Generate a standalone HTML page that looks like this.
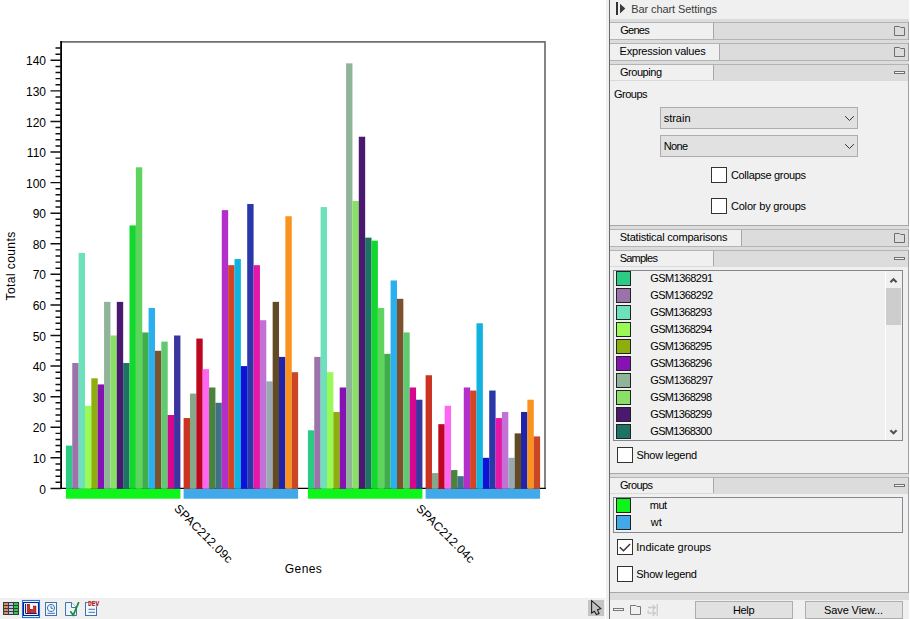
<!DOCTYPE html>
<html><head><meta charset="utf-8">
<style>
html,body{margin:0;padding:0;width:910px;height:619px;overflow:hidden;background:#fff;}
body{position:relative;font-family:"Liberation Sans",sans-serif;}
.a{position:absolute;box-sizing:content-box;}
.t{position:absolute;font-size:11px;color:#000;white-space:nowrap;font-family:"Liberation Sans",sans-serif;}
</style></head><body>
<svg class="a" style="left:0;top:0" width="605" height="598">
<rect x="0" y="0" width="605" height="598" fill="#fff"/>
<path d="M60.5 41.9 H545 V488.4" fill="none" stroke="#707070" stroke-width="1.7"/>
<path d="M61.1 41 V488.4" fill="none" stroke="#000" stroke-width="1.8"/>
<path d="M60.2 488.35 H545.8" fill="none" stroke="#000" stroke-width="1.15"/>
<rect x="65.90" y="445.59" width="6.381" height="43.26" fill="#2BCB85"/>
<rect x="72.26" y="363.02" width="6.381" height="125.83" fill="#9B72AA"/>
<rect x="78.62" y="252.93" width="6.381" height="235.92" fill="#6DE0BC"/>
<rect x="84.98" y="405.83" width="6.381" height="83.02" fill="#99F955"/>
<rect x="91.34" y="378.31" width="6.381" height="110.54" fill="#8DAF0B"/>
<rect x="97.71" y="384.43" width="6.381" height="104.42" fill="#8612B3"/>
<rect x="104.07" y="301.86" width="6.381" height="186.99" fill="#90B49A"/>
<rect x="110.43" y="335.50" width="6.381" height="153.35" fill="#8ADF67"/>
<rect x="116.79" y="301.86" width="6.381" height="186.99" fill="#4B1870"/>
<rect x="123.15" y="363.02" width="6.381" height="125.83" fill="#1E7265"/>
<rect x="129.51" y="225.41" width="6.381" height="263.44" fill="#12D82E"/>
<rect x="135.87" y="167.31" width="6.381" height="321.54" fill="#5ED45E"/>
<rect x="142.23" y="332.44" width="6.381" height="156.41" fill="#3EAE48"/>
<rect x="148.59" y="307.98" width="6.381" height="180.87" fill="#2AAFEF"/>
<rect x="154.96" y="350.79" width="6.381" height="138.06" fill="#7D502E"/>
<rect x="161.32" y="341.62" width="6.381" height="147.23" fill="#5FCA71"/>
<rect x="167.68" y="415.01" width="6.381" height="73.84" fill="#D7068F"/>
<rect x="174.04" y="335.50" width="6.381" height="153.35" fill="#3C35A0"/>
<rect x="183.60" y="418.07" width="6.381" height="70.78" fill="#CC3222"/>
<rect x="189.96" y="393.60" width="6.381" height="95.25" fill="#86A888"/>
<rect x="196.32" y="338.56" width="6.381" height="150.29" fill="#BD061F"/>
<rect x="202.68" y="369.14" width="6.381" height="119.71" fill="#FF66F2"/>
<rect x="209.04" y="387.49" width="6.381" height="101.36" fill="#48853A"/>
<rect x="215.41" y="402.78" width="6.381" height="86.07" fill="#3F7087"/>
<rect x="221.77" y="210.12" width="6.381" height="278.73" fill="#B32FC9"/>
<rect x="228.13" y="265.17" width="6.381" height="223.68" fill="#D24423"/>
<rect x="234.49" y="259.05" width="6.381" height="229.80" fill="#10B3E0"/>
<rect x="240.85" y="366.08" width="6.381" height="122.77" fill="#0C13D6"/>
<rect x="247.21" y="204.01" width="6.381" height="284.84" fill="#2A37AA"/>
<rect x="253.57" y="265.17" width="6.381" height="223.68" fill="#E517A7"/>
<rect x="259.93" y="320.21" width="6.381" height="168.64" fill="#C271D5"/>
<rect x="266.29" y="381.37" width="6.381" height="107.48" fill="#98A9B4"/>
<rect x="272.66" y="301.86" width="6.381" height="186.99" fill="#624B22"/>
<rect x="279.02" y="356.91" width="6.381" height="131.94" fill="#2123AB"/>
<rect x="285.38" y="216.24" width="6.381" height="272.61" fill="#FA931E"/>
<rect x="291.74" y="372.20" width="6.381" height="116.65" fill="#CB4624"/>
<rect x="307.90" y="430.30" width="6.381" height="58.55" fill="#2BCB85"/>
<rect x="314.26" y="356.91" width="6.381" height="131.94" fill="#9B72AA"/>
<rect x="320.62" y="207.06" width="6.381" height="281.79" fill="#6DE0BC"/>
<rect x="326.98" y="372.20" width="6.381" height="116.65" fill="#99F955"/>
<rect x="333.34" y="411.95" width="6.381" height="76.90" fill="#8DAF0B"/>
<rect x="339.71" y="387.49" width="6.381" height="101.36" fill="#8612B3"/>
<rect x="346.07" y="63.34" width="6.381" height="425.51" fill="#90B49A"/>
<rect x="352.43" y="200.95" width="6.381" height="287.90" fill="#8ADF67"/>
<rect x="358.79" y="136.73" width="6.381" height="352.12" fill="#4B1870"/>
<rect x="365.15" y="237.64" width="6.381" height="251.21" fill="#1E7265"/>
<rect x="371.51" y="240.70" width="6.381" height="248.15" fill="#12D82E"/>
<rect x="377.87" y="307.98" width="6.381" height="180.87" fill="#5ED45E"/>
<rect x="384.23" y="353.85" width="6.381" height="135.00" fill="#3EAE48"/>
<rect x="390.59" y="280.46" width="6.381" height="208.39" fill="#2AAFEF"/>
<rect x="396.96" y="298.80" width="6.381" height="190.05" fill="#7D502E"/>
<rect x="403.32" y="332.44" width="6.381" height="156.41" fill="#5FCA71"/>
<rect x="409.68" y="387.49" width="6.381" height="101.36" fill="#D7068F"/>
<rect x="416.04" y="399.72" width="6.381" height="89.13" fill="#3C35A0"/>
<rect x="425.60" y="375.25" width="6.381" height="113.60" fill="#CC3222"/>
<rect x="431.96" y="473.11" width="6.381" height="15.74" fill="#86A888"/>
<rect x="438.32" y="424.18" width="6.381" height="64.67" fill="#BD061F"/>
<rect x="444.68" y="405.83" width="6.381" height="83.02" fill="#FF66F2"/>
<rect x="451.04" y="470.05" width="6.381" height="18.80" fill="#48853A"/>
<rect x="457.41" y="476.17" width="6.381" height="12.68" fill="#3F7087"/>
<rect x="463.77" y="387.49" width="6.381" height="101.36" fill="#B32FC9"/>
<rect x="470.13" y="390.54" width="6.381" height="98.31" fill="#D24423"/>
<rect x="476.49" y="323.27" width="6.381" height="165.58" fill="#10B3E0"/>
<rect x="482.85" y="457.82" width="6.381" height="31.03" fill="#0C13D6"/>
<rect x="489.21" y="390.54" width="6.381" height="98.31" fill="#2A37AA"/>
<rect x="495.57" y="418.07" width="6.381" height="70.78" fill="#E517A7"/>
<rect x="501.93" y="411.95" width="6.381" height="76.90" fill="#C271D5"/>
<rect x="508.29" y="457.82" width="6.381" height="31.03" fill="#98A9B4"/>
<rect x="514.66" y="433.36" width="6.381" height="55.49" fill="#624B22"/>
<rect x="521.02" y="411.95" width="6.381" height="76.90" fill="#2123AB"/>
<rect x="527.38" y="399.72" width="6.381" height="89.13" fill="#FA931E"/>
<rect x="533.74" y="436.41" width="6.381" height="52.44" fill="#CB4624"/>
<rect x="65.90" y="488.85" width="114.50" height="9.85" fill="#0DF51A"/>
<rect x="183.60" y="488.85" width="114.50" height="9.85" fill="#41A9EA"/>
<rect x="307.90" y="488.85" width="114.50" height="9.85" fill="#0DF51A"/>
<rect x="425.60" y="488.85" width="114.50" height="9.85" fill="#41A9EA"/>
<path d="M50.5 488.40H61 M55.5 482.28H61 M55.5 476.17H61 M55.5 470.05H61 M55.5 463.94H61 M50.5 457.82H61 M55.5 451.70H61 M55.5 445.59H61 M55.5 439.47H61 M55.5 433.36H61 M50.5 427.24H61 M55.5 421.12H61 M55.5 415.01H61 M55.5 408.89H61 M55.5 402.78H61 M50.5 396.66H61 M55.5 390.54H61 M55.5 384.43H61 M55.5 378.31H61 M55.5 372.20H61 M50.5 366.08H61 M55.5 359.96H61 M55.5 353.85H61 M55.5 347.73H61 M55.5 341.62H61 M50.5 335.50H61 M55.5 329.38H61 M55.5 323.27H61 M55.5 317.15H61 M55.5 311.04H61 M50.5 304.92H61 M55.5 298.80H61 M55.5 292.69H61 M55.5 286.57H61 M55.5 280.46H61 M50.5 274.34H61 M55.5 268.22H61 M55.5 262.11H61 M55.5 255.99H61 M55.5 249.88H61 M50.5 243.76H61 M55.5 237.64H61 M55.5 231.53H61 M55.5 225.41H61 M55.5 219.30H61 M50.5 213.18H61 M55.5 207.06H61 M55.5 200.95H61 M55.5 194.83H61 M55.5 188.72H61 M50.5 182.60H61 M55.5 176.48H61 M55.5 170.37H61 M55.5 164.25H61 M55.5 158.14H61 M50.5 152.02H61 M55.5 145.90H61 M55.5 139.79H61 M55.5 133.67H61 M55.5 127.56H61 M50.5 121.44H61 M55.5 115.32H61 M55.5 109.21H61 M55.5 103.09H61 M55.5 96.98H61 M50.5 90.86H61 M55.5 84.74H61 M55.5 78.63H61 M55.5 72.51H61 M55.5 66.40H61 M50.5 60.28H61 M55.5 54.16H61 M55.5 48.05H61" stroke="#111" stroke-width="1.45" fill="none"/>
<text x="46" y="493.53" text-anchor="end" font-size="12" font-family="Liberation Sans" fill="#000">0</text>
<text x="46" y="462.95" text-anchor="end" font-size="12" font-family="Liberation Sans" fill="#000">10</text>
<text x="46" y="432.37" text-anchor="end" font-size="12" font-family="Liberation Sans" fill="#000">20</text>
<text x="46" y="401.79" text-anchor="end" font-size="12" font-family="Liberation Sans" fill="#000">30</text>
<text x="46" y="371.21" text-anchor="end" font-size="12" font-family="Liberation Sans" fill="#000">40</text>
<text x="46" y="340.63" text-anchor="end" font-size="12" font-family="Liberation Sans" fill="#000">50</text>
<text x="46" y="310.05" text-anchor="end" font-size="12" font-family="Liberation Sans" fill="#000">60</text>
<text x="46" y="279.47" text-anchor="end" font-size="12" font-family="Liberation Sans" fill="#000">70</text>
<text x="46" y="248.89" text-anchor="end" font-size="12" font-family="Liberation Sans" fill="#000">80</text>
<text x="46" y="218.31" text-anchor="end" font-size="12" font-family="Liberation Sans" fill="#000">90</text>
<text x="46" y="187.73" text-anchor="end" font-size="12" font-family="Liberation Sans" fill="#000">100</text>
<text x="46" y="157.15" text-anchor="end" font-size="12" font-family="Liberation Sans" fill="#000">110</text>
<text x="46" y="126.57" text-anchor="end" font-size="12" font-family="Liberation Sans" fill="#000">120</text>
<text x="46" y="95.99" text-anchor="end" font-size="12" font-family="Liberation Sans" fill="#000">130</text>
<text x="46" y="65.41" text-anchor="end" font-size="12" font-family="Liberation Sans" fill="#000">140</text>
<text transform="translate(15.3,266.1) rotate(-90)" text-anchor="middle" font-size="12" font-family="Liberation Sans" fill="#000" textLength="68.6" lengthAdjust="spacing">Total counts</text>
<text x="303.3" y="573" text-anchor="middle" font-size="12" font-family="Liberation Sans" fill="#000" textLength="36.9" lengthAdjust="spacing">Genes</text>
<text transform="translate(173.4,509.3) rotate(45)" font-size="12" font-family="Liberation Sans" fill="#000" textLength="77" lengthAdjust="spacing">SPAC212.09c</text>
<text transform="translate(415.4,509.3) rotate(45)" font-size="12" font-family="Liberation Sans" fill="#000" textLength="77" lengthAdjust="spacing">SPAC212.04c</text>
</svg>

<div class="a" style="left:0;top:598px;width:605px;height:21px;background:#f0f0f0"></div>
<svg class="a" style="left:0;top:598px" width="605" height="21">
 <!-- table icon -->
 <rect x="3" y="4" width="16" height="13" fill="#3a3a3a"/>
 <g>
  <rect x="4" y="5" width="4" height="2" fill="#d98a6a"/><rect x="9" y="5" width="4" height="2" fill="#b8c8f0"/><rect x="14" y="5" width="4" height="2" fill="#2ec84a"/>
  <rect x="4" y="8" width="4" height="2" fill="#d98a6a"/><rect x="9" y="8" width="4" height="2" fill="#b8c8f0"/><rect x="14" y="8" width="4" height="2" fill="#2ec84a"/>
  <rect x="4" y="11" width="4" height="2" fill="#d98a6a"/><rect x="9" y="11" width="4" height="2" fill="#b8c8f0"/><rect x="14" y="11" width="4" height="2" fill="#2ec84a"/>
  <rect x="4" y="14" width="4" height="2" fill="#d98a6a"/><rect x="9" y="14" width="4" height="2" fill="#b8c8f0"/><rect x="14" y="14" width="4" height="2" fill="#2ec84a"/>
 </g>
 <!-- bar chart selected -->
 <rect x="22.5" y="2.5" width="17" height="17" fill="#fff" stroke="#1a78e0" stroke-width="1.1"/>
 <rect x="23.5" y="4.5" width="15" height="13" fill="#f4f9ff" stroke="#14207a" stroke-width="1.1"/>
 <rect x="27.2" y="6.3" width="2.4" height="9.2" fill="#e8281c" stroke="#7a0606" stroke-width="0.6"/>
 <rect x="30.4" y="11.5" width="2" height="4" fill="#e8281c" stroke="#7a0606" stroke-width="0.6"/>
 <rect x="33.5" y="8.1" width="2.4" height="7.4" fill="#e8281c" stroke="#7a0606" stroke-width="0.6"/>
 <path d="M25.5 6V15.5H36.8" stroke="#14207a" stroke-width="1" fill="none"/>
 <!-- clock doc -->
 <rect x="45.5" y="4.5" width="11" height="13" fill="#f4f8fc" stroke="#3e73b0" stroke-width="1"/>
 <circle cx="51" cy="10" r="3.6" fill="none" stroke="#3e73b0" stroke-width="1"/>
 <path d="M51 7.8V10.3H53.2 M47.5 15.3H55" stroke="#3e73b0" stroke-width="1" fill="none"/>
 <!-- doc check -->
 <path d="M65.5 4.5H71.5L76.5 9.5V17.5H65.5Z" fill="#eef3fa" stroke="#3e73b0" stroke-width="1"/>
 <path d="M71.5 4.5V9.5H76.5" fill="#fff" stroke="#3e73b0" stroke-width="1"/>
 <path d="M70.3 13.3L73.3 17L78.8 4.1" fill="none" stroke="#1b8a3a" stroke-width="1.7"/>
 <!-- dev doc -->
 <rect x="85.5" y="4.5" width="11" height="13" fill="#f4f8fc" stroke="#3e73b0" stroke-width="1"/>
 <path d="M88.5 11.3H95 M88.5 14.3H95" stroke="#3e73b0" stroke-width="1"/>
 <rect x="87.5" y="2.5" width="12" height="6" fill="#f0f0f0" opacity="0.6"/>
 <text x="88" y="8" font-size="6.8" font-family="Liberation Mono" font-weight="bold" fill="#b80c0c" textLength="11.2" lengthAdjust="spacingAndGlyphs">DEV</text>
 <!-- cursor -->
 <rect x="588" y="2" width="16" height="16" fill="#c4c4c4"/>
 <path d="M591.6 2.6V15L594.4 13.2L596.4 16.6L599.1 15.4L597.4 11.9L600.8 10.5Z" fill="#c4c4c4" stroke="#222" stroke-width="1.1" stroke-linejoin="miter"/>
</svg>

<div class="a" style="left:605px;top:0;width:1px;height:619px;background:#fff"></div><div class="a" style="left:606px;top:0;width:3px;height:619px;background:#efefef"></div><div class="a" style="left:609px;top:0;width:1px;height:619px;background:#6b6b6b"></div><div class="a" style="left:610px;top:0;width:299px;height:619px;background:#f0f0f0"></div><div class="a" style="left:909px;top:0;width:1px;height:619px;background:#fff"></div><svg class="a" style="left:610px;top:0" width="30" height="19"><rect x="6" y="2" width="2" height="13" fill="#333"/><path d="M10 3.8L15.3 8.6L10 13.4Z" fill="#3a3a3a"/></svg><div class="a" style="left:610px;top:19px;width:299px;height:3px;background:#dcdcdc"></div><div class="a" style="left:610px;top:40px;width:299px;height:3px;background:#dcdcdc"></div><div class="a" style="left:610px;top:61px;width:299px;height:3px;background:#dcdcdc"></div><div class="a" style="left:610px;top:226px;width:299px;height:3px;background:#dcdcdc"></div><div class="a" style="left:610px;top:247px;width:299px;height:3px;background:#dcdcdc"></div><div class="a" style="left:610px;top:474px;width:299px;height:3px;background:#dcdcdc"></div><div class="a" style="left:610px;top:593px;width:299px;height:7px;background:#dcdcdc"></div><div class="a" style="left:610px;top:22px;width:298px;height:1px;background:#b4b4b4"></div><div class="a" style="left:610px;top:23px;width:103px;height:16px;background:#f0f0f0"></div><div class="a" style="left:713px;top:23px;width:1px;height:16px;background:#a8a8a8"></div><div class="a" style="left:714px;top:23px;width:194px;height:16px;background:#dcdcdc"></div><div class="t" style="left:620px;top:23px;line-height:16px"></div><svg class="a" style="left:893px;top:25px" width="13" height="12"><path d="M1.5 1.5H6.5L7.5 2.5H11.5V10.5H1.5Z" fill="none" stroke="#6e6e6e" stroke-width="1"/></svg><div class="a" style="left:610px;top:39px;width:298px;height:1px;background:#b4b4b4"></div><div class="a" style="left:908px;top:22px;width:1px;height:18px;background:#a0a0a0"></div><div class="a" style="left:610px;top:43px;width:298px;height:1px;background:#b4b4b4"></div><div class="a" style="left:610px;top:44px;width:109px;height:16px;background:#f0f0f0"></div><div class="a" style="left:719px;top:44px;width:1px;height:16px;background:#a8a8a8"></div><div class="a" style="left:720px;top:44px;width:188px;height:16px;background:#dcdcdc"></div><div class="t" style="left:620px;top:44px;line-height:16px"></div><svg class="a" style="left:893px;top:46px" width="13" height="12"><path d="M1.5 1.5H6.5L7.5 2.5H11.5V10.5H1.5Z" fill="none" stroke="#6e6e6e" stroke-width="1"/></svg><div class="a" style="left:610px;top:60px;width:298px;height:1px;background:#b4b4b4"></div><div class="a" style="left:908px;top:43px;width:1px;height:18px;background:#a0a0a0"></div><div class="a" style="left:610px;top:64px;width:298px;height:1px;background:#b4b4b4"></div><div class="a" style="left:610px;top:65px;width:103px;height:16px;background:#f0f0f0"></div><div class="a" style="left:713px;top:65px;width:1px;height:16px;background:#a8a8a8"></div><div class="a" style="left:714px;top:65px;width:194px;height:16px;background:#dcdcdc"></div><div class="t" style="left:620px;top:65px;line-height:16px"></div><svg class="a" style="left:893px;top:71px" width="13" height="5"><rect x="1.5" y="0.5" width="10" height="2" fill="#f4f4f4" stroke="#707070" stroke-width="1"/></svg><div class="a" style="left:610px;top:80px;width:298px;height:1px;background:#dadada"></div><div class="a" style="left:610px;top:225px;width:298px;height:1px;background:#a8a8a8"></div><div class="a" style="left:908px;top:64px;width:1px;height:162px;background:#a0a0a0"></div><div class="a" style="left:660px;top:107px;width:196px;height:20px;border:1px solid #adadad;background:#e1e1e1"></div><div class="t" style="left:663px;top:108px;line-height:20px"></div><svg class="a" style="left:842px;top:114px" width="14" height="9"><path d="M3.1 2.2L7.5 6.5L11.9 2.2" fill="none" stroke="#333" stroke-width="1"/></svg><div class="a" style="left:660px;top:135px;width:196px;height:20px;border:1px solid #adadad;background:#e1e1e1"></div><div class="t" style="left:663px;top:136px;line-height:20px"></div><svg class="a" style="left:842px;top:142px" width="14" height="9"><path d="M3.1 2.2L7.5 6.5L11.9 2.2" fill="none" stroke="#333" stroke-width="1"/></svg><div class="a" style="left:711px;top:167px;width:14px;height:14px;border:1px solid #333;background:#fff"></div><div class="a" style="left:711px;top:198px;width:14px;height:14px;border:1px solid #333;background:#fff"></div><div class="a" style="left:610px;top:229px;width:298px;height:1px;background:#b4b4b4"></div><div class="a" style="left:610px;top:230px;width:131px;height:16px;background:#f0f0f0"></div><div class="a" style="left:741px;top:230px;width:1px;height:16px;background:#a8a8a8"></div><div class="a" style="left:742px;top:230px;width:166px;height:16px;background:#dcdcdc"></div><div class="t" style="left:620px;top:230px;line-height:16px"></div><svg class="a" style="left:893px;top:232px" width="13" height="12"><path d="M1.5 1.5H6.5L7.5 2.5H11.5V10.5H1.5Z" fill="none" stroke="#6e6e6e" stroke-width="1"/></svg><div class="a" style="left:610px;top:246px;width:298px;height:1px;background:#b4b4b4"></div><div class="a" style="left:908px;top:229px;width:1px;height:18px;background:#a0a0a0"></div><div class="a" style="left:610px;top:250px;width:298px;height:1px;background:#b4b4b4"></div><div class="a" style="left:610px;top:251px;width:103px;height:16px;background:#f0f0f0"></div><div class="a" style="left:713px;top:251px;width:1px;height:16px;background:#a8a8a8"></div><div class="a" style="left:714px;top:251px;width:194px;height:16px;background:#dcdcdc"></div><div class="t" style="left:620px;top:251px;line-height:16px"></div><svg class="a" style="left:893px;top:257px" width="13" height="5"><rect x="1.5" y="0.5" width="10" height="2" fill="#f4f4f4" stroke="#707070" stroke-width="1"/></svg><div class="a" style="left:610px;top:266px;width:298px;height:1px;background:#dadada"></div><div class="a" style="left:610px;top:473px;width:298px;height:1px;background:#a8a8a8"></div><div class="a" style="left:908px;top:250px;width:1px;height:224px;background:#a0a0a0"></div><div class="a" style="left:613px;top:270px;width:288px;height:169px;border:1px solid #828790;background:#f0f0f0;overflow:hidden"><div class="a" style="left:2px;top:0px;width:13px;height:13px;border:1px solid #222;background:#2BCB85"></div><div class="a" style="left:2px;top:17px;width:13px;height:13px;border:1px solid #222;background:#9B72AA"></div><div class="a" style="left:2px;top:34px;width:13px;height:13px;border:1px solid #222;background:#6DE0BC"></div><div class="a" style="left:2px;top:51px;width:13px;height:13px;border:1px solid #222;background:#99F955"></div><div class="a" style="left:2px;top:68px;width:13px;height:13px;border:1px solid #222;background:#8DAF0B"></div><div class="a" style="left:2px;top:85px;width:13px;height:13px;border:1px solid #222;background:#8612B3"></div><div class="a" style="left:2px;top:102px;width:13px;height:13px;border:1px solid #222;background:#90B49A"></div><div class="a" style="left:2px;top:119px;width:13px;height:13px;border:1px solid #222;background:#8ADF67"></div><div class="a" style="left:2px;top:136px;width:13px;height:13px;border:1px solid #222;background:#4B1870"></div><div class="a" style="left:2px;top:153px;width:13px;height:13px;border:1px solid #222;background:#1E7265"></div></div><div class="a" style="left:885px;top:271px;width:1px;height:169px;background:#fff"></div><div class="a" style="left:886px;top:288px;width:15px;height:37px;background:#cdcdcd"></div><svg class="a" style="left:886px;top:274px" width="15" height="12"><path d="M4.4 8.3L7.5 5.2L10.6 8.3" fill="none" stroke="#505050" stroke-width="2"/></svg><svg class="a" style="left:886px;top:426px" width="15" height="12"><path d="M4.4 4.2L7.5 7.3L10.6 4.2" fill="none" stroke="#505050" stroke-width="2"/></svg><div class="a" style="left:617px;top:447px;width:14px;height:14px;border:1px solid #333;background:#fff"></div><div class="a" style="left:610px;top:477px;width:298px;height:1px;background:#b4b4b4"></div><div class="a" style="left:610px;top:478px;width:103px;height:16px;background:#f0f0f0"></div><div class="a" style="left:713px;top:478px;width:1px;height:16px;background:#a8a8a8"></div><div class="a" style="left:714px;top:478px;width:194px;height:16px;background:#dcdcdc"></div><div class="t" style="left:620px;top:478px;line-height:16px"></div><svg class="a" style="left:893px;top:484px" width="13" height="5"><rect x="1.5" y="0.5" width="10" height="2" fill="#f4f4f4" stroke="#707070" stroke-width="1"/></svg><div class="a" style="left:610px;top:493px;width:298px;height:1px;background:#dadada"></div><div class="a" style="left:610px;top:592px;width:298px;height:1px;background:#a8a8a8"></div><div class="a" style="left:908px;top:477px;width:1px;height:116px;background:#a0a0a0"></div><div class="a" style="left:613px;top:497px;width:288px;height:34px;border:1px solid #828790;background:#f0f0f0"></div><div class="a" style="left:616px;top:498px;width:13px;height:13px;border:1px solid #222;background:#0DF51A"></div><div class="a" style="left:616px;top:515px;width:13px;height:13px;border:1px solid #222;background:#41A9EA"></div><div class="a" style="left:617px;top:539px;width:14px;height:14px;border:1px solid #333;background:#fff"></div><svg class="a" style="left:617px;top:539px" width="16" height="16"><path d="M2.8 8.2L6.5 11.8L13.1 4.9" fill="none" stroke="#333" stroke-width="1.4"/></svg><div class="a" style="left:617px;top:566px;width:14px;height:14px;border:1px solid #333;background:#fff"></div><svg class="a" style="left:610px;top:600px" width="60" height="19"><rect x="3.5" y="8.5" width="10" height="2" fill="#f4f4f4" stroke="#777" stroke-width="1"/><path d="M20.5 5.5H26L27 6.5H30.5V14.5H20.5Z" fill="none" stroke="#777" stroke-width="1"/><path d="M38 7.5H45.3 M42.6 4.9L45.3 7.5L42.6 10.1 M38.2 10.3V13.2H45.3 M42.6 10.6L45.3 13.2L42.6 15.8 M47.2 4V15.8" fill="none" stroke="#c8c8c8" stroke-width="1.3"/></svg><div class="a" style="left:695px;top:601px;width:96px;height:16px;border:1px solid #adadad;background:#e1e1e1"></div><div class="a" style="left:805px;top:601px;width:96px;height:16px;border:1px solid #adadad;background:#e1e1e1"></div>
<svg class="a" style="left:0;top:0" width="910" height="619">
<text x="631.30" y="13" font-size="11" font-family="Liberation Sans" fill="#3c3c3c" textLength="85.80" lengthAdjust="spacing">Bar chart Settings</text>
<text x="620.30" y="34" font-size="11" font-family="Liberation Sans" fill="#000" textLength="29.40" lengthAdjust="spacing">Genes</text>
<text x="619.50" y="55" font-size="11" font-family="Liberation Sans" fill="#000" textLength="86.20" lengthAdjust="spacing">Expression values</text>
<text x="619.90" y="76" font-size="11" font-family="Liberation Sans" fill="#000" textLength="42.20" lengthAdjust="spacing">Grouping</text>
<text x="613.90" y="98" font-size="11" font-family="Liberation Sans" fill="#000" textLength="33.60" lengthAdjust="spacing">Groups</text>
<text x="663.70" y="122" font-size="11" font-family="Liberation Sans" fill="#000" textLength="26.80" lengthAdjust="spacing">strain</text>
<text x="663.70" y="150" font-size="11" font-family="Liberation Sans" fill="#000" textLength="24.40" lengthAdjust="spacing">None</text>
<text x="730.90" y="178.5" font-size="11" font-family="Liberation Sans" fill="#000" textLength="75.20" lengthAdjust="spacing">Collapse groups</text>
<text x="730.90" y="209.5" font-size="11" font-family="Liberation Sans" fill="#000" textLength="75.20" lengthAdjust="spacing">Color by groups</text>
<text x="619.70" y="241" font-size="11" font-family="Liberation Sans" fill="#000" textLength="107.80" lengthAdjust="spacing">Statistical comparisons</text>
<text x="619.70" y="262" font-size="11" font-family="Liberation Sans" fill="#000" textLength="38.20" lengthAdjust="spacing">Samples</text>
<text x="650.30" y="282" font-size="11" font-family="Liberation Sans" fill="#000" textLength="62.80" lengthAdjust="spacing">GSM1368291</text>
<text x="650.30" y="299" font-size="11" font-family="Liberation Sans" fill="#000" textLength="62.80" lengthAdjust="spacing">GSM1368292</text>
<text x="650.30" y="316" font-size="11" font-family="Liberation Sans" fill="#000" textLength="61.80" lengthAdjust="spacing">GSM1368293</text>
<text x="650.30" y="333" font-size="11" font-family="Liberation Sans" fill="#000" textLength="61.80" lengthAdjust="spacing">GSM1368294</text>
<text x="650.30" y="350" font-size="11" font-family="Liberation Sans" fill="#000" textLength="61.80" lengthAdjust="spacing">GSM1368295</text>
<text x="650.30" y="367" font-size="11" font-family="Liberation Sans" fill="#000" textLength="61.80" lengthAdjust="spacing">GSM1368296</text>
<text x="650.30" y="384" font-size="11" font-family="Liberation Sans" fill="#000" textLength="62.80" lengthAdjust="spacing">GSM1368297</text>
<text x="650.30" y="401" font-size="11" font-family="Liberation Sans" fill="#000" textLength="61.80" lengthAdjust="spacing">GSM1368298</text>
<text x="650.30" y="418" font-size="11" font-family="Liberation Sans" fill="#000" textLength="61.80" lengthAdjust="spacing">GSM1368299</text>
<text x="650.30" y="435" font-size="11" font-family="Liberation Sans" fill="#000" textLength="61.80" lengthAdjust="spacing">GSM1368300</text>
<text x="636.50" y="459" font-size="11" font-family="Liberation Sans" fill="#000" textLength="60.60" lengthAdjust="spacing">Show legend</text>
<text x="619.90" y="489" font-size="11" font-family="Liberation Sans" fill="#000" textLength="33.00" lengthAdjust="spacing">Groups</text>
<text x="649.70" y="509" font-size="11" font-family="Liberation Sans" fill="#000" textLength="17.40" lengthAdjust="spacing">mut</text>
<text x="650.70" y="526" font-size="11" font-family="Liberation Sans" fill="#000" textLength="11.20" lengthAdjust="spacing">wt</text>
<text x="636.30" y="551" font-size="11" font-family="Liberation Sans" fill="#000" textLength="74.80" lengthAdjust="spacing">Indicate groups</text>
<text x="636.30" y="577.5" font-size="11" font-family="Liberation Sans" fill="#000" textLength="60.60" lengthAdjust="spacing">Show legend</text>
<text x="732.90" y="614" font-size="11" font-family="Liberation Sans" fill="#000" textLength="21.60" lengthAdjust="spacing">Help</text>
<text x="824.10" y="614" font-size="11" font-family="Liberation Sans" fill="#000" textLength="59.00" lengthAdjust="spacing">Save View...</text>
</svg>
</body></html>
